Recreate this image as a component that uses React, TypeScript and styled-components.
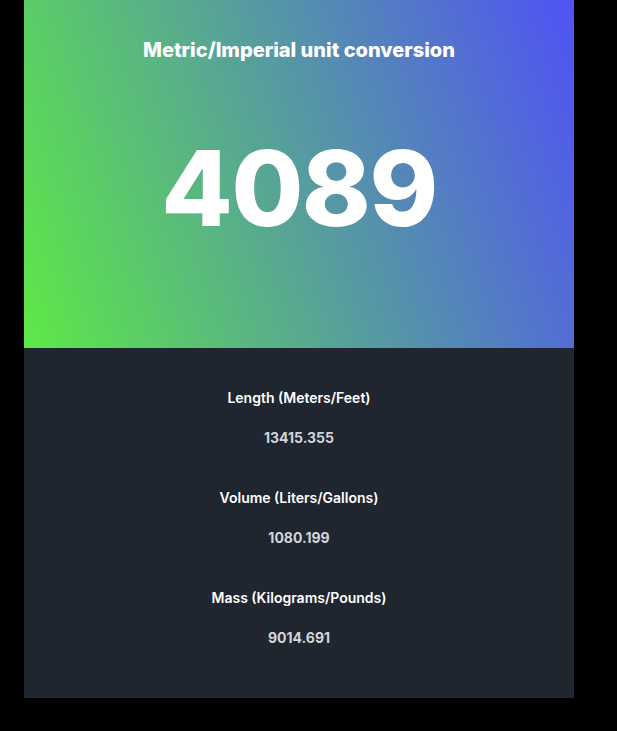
import React from 'react';
import styled, { createGlobalStyle } from 'styled-components';

const GlobalStyle = createGlobalStyle`
  html, body {
    margin: 0;
    padding: 0;
    background-color: #000;
    font-family: Inter, "Noto Sans", sans-serif;
  }
`;

const Page = styled.div`
  min-height: 100vh;
  background-color: #000;
  padding-left: 24px;
`;

const Card = styled.div`
  width: 550px;
`;

const Hero = styled.div`
  height: 348px;
  box-sizing: border-box;
  background: linear-gradient(70deg, #5ee946, #4f52f5);
  display: flex;
  flex-direction: column;
  align-items: center;
  padding-top: 38px;
`;

const Title = styled.h1`
  margin: 0;
  font-size: 20px;
  line-height: 24px;
  font-weight: 800;
  color: #fff;
`;

const BigNumber = styled.div`
  margin-top: 66px;
  font-size: 104px;
  line-height: 120px;
  font-weight: 800;
  color: #fff;
  letter-spacing: -1.5px;
`;

const Details = styled.div`
  background-color: #1f2630;
  padding: 40px 0 50px;
  display: flex;
  flex-direction: column;
  align-items: center;
  gap: 40px;
`;

const Group = styled.div`
  display: flex;
  flex-direction: column;
  align-items: center;
  gap: 20px;
`;

const Label = styled.div`
  font-size: 14px;
  line-height: 20px;
  font-weight: 600;
  color: #fff;
`;

const Value = styled.div`
  font-size: 14px;
  line-height: 20px;
  font-weight: 700;
  color: #d1d5db;
`;

const conversions = [
  { label: 'Length (Meters/Feet)', value: '13415.355' },
  { label: 'Volume (Liters/Gallons)', value: '1080.199' },
  { label: 'Mass (Kilograms/Pounds)', value: '9014.691' },
];

const App = () => {
  return (
    <Page>
      <GlobalStyle />
      <Card>
        <Hero>
          <Title>Metric/Imperial unit conversion</Title>
          <BigNumber>4089</BigNumber>
        </Hero>
        <Details>
          {conversions.map((c) => (
            <Group key={c.label}>
              <Label>{c.label}</Label>
              <Value>{c.value}</Value>
            </Group>
          ))}
        </Details>
      </Card>
    </Page>
  );
};

export default App;
